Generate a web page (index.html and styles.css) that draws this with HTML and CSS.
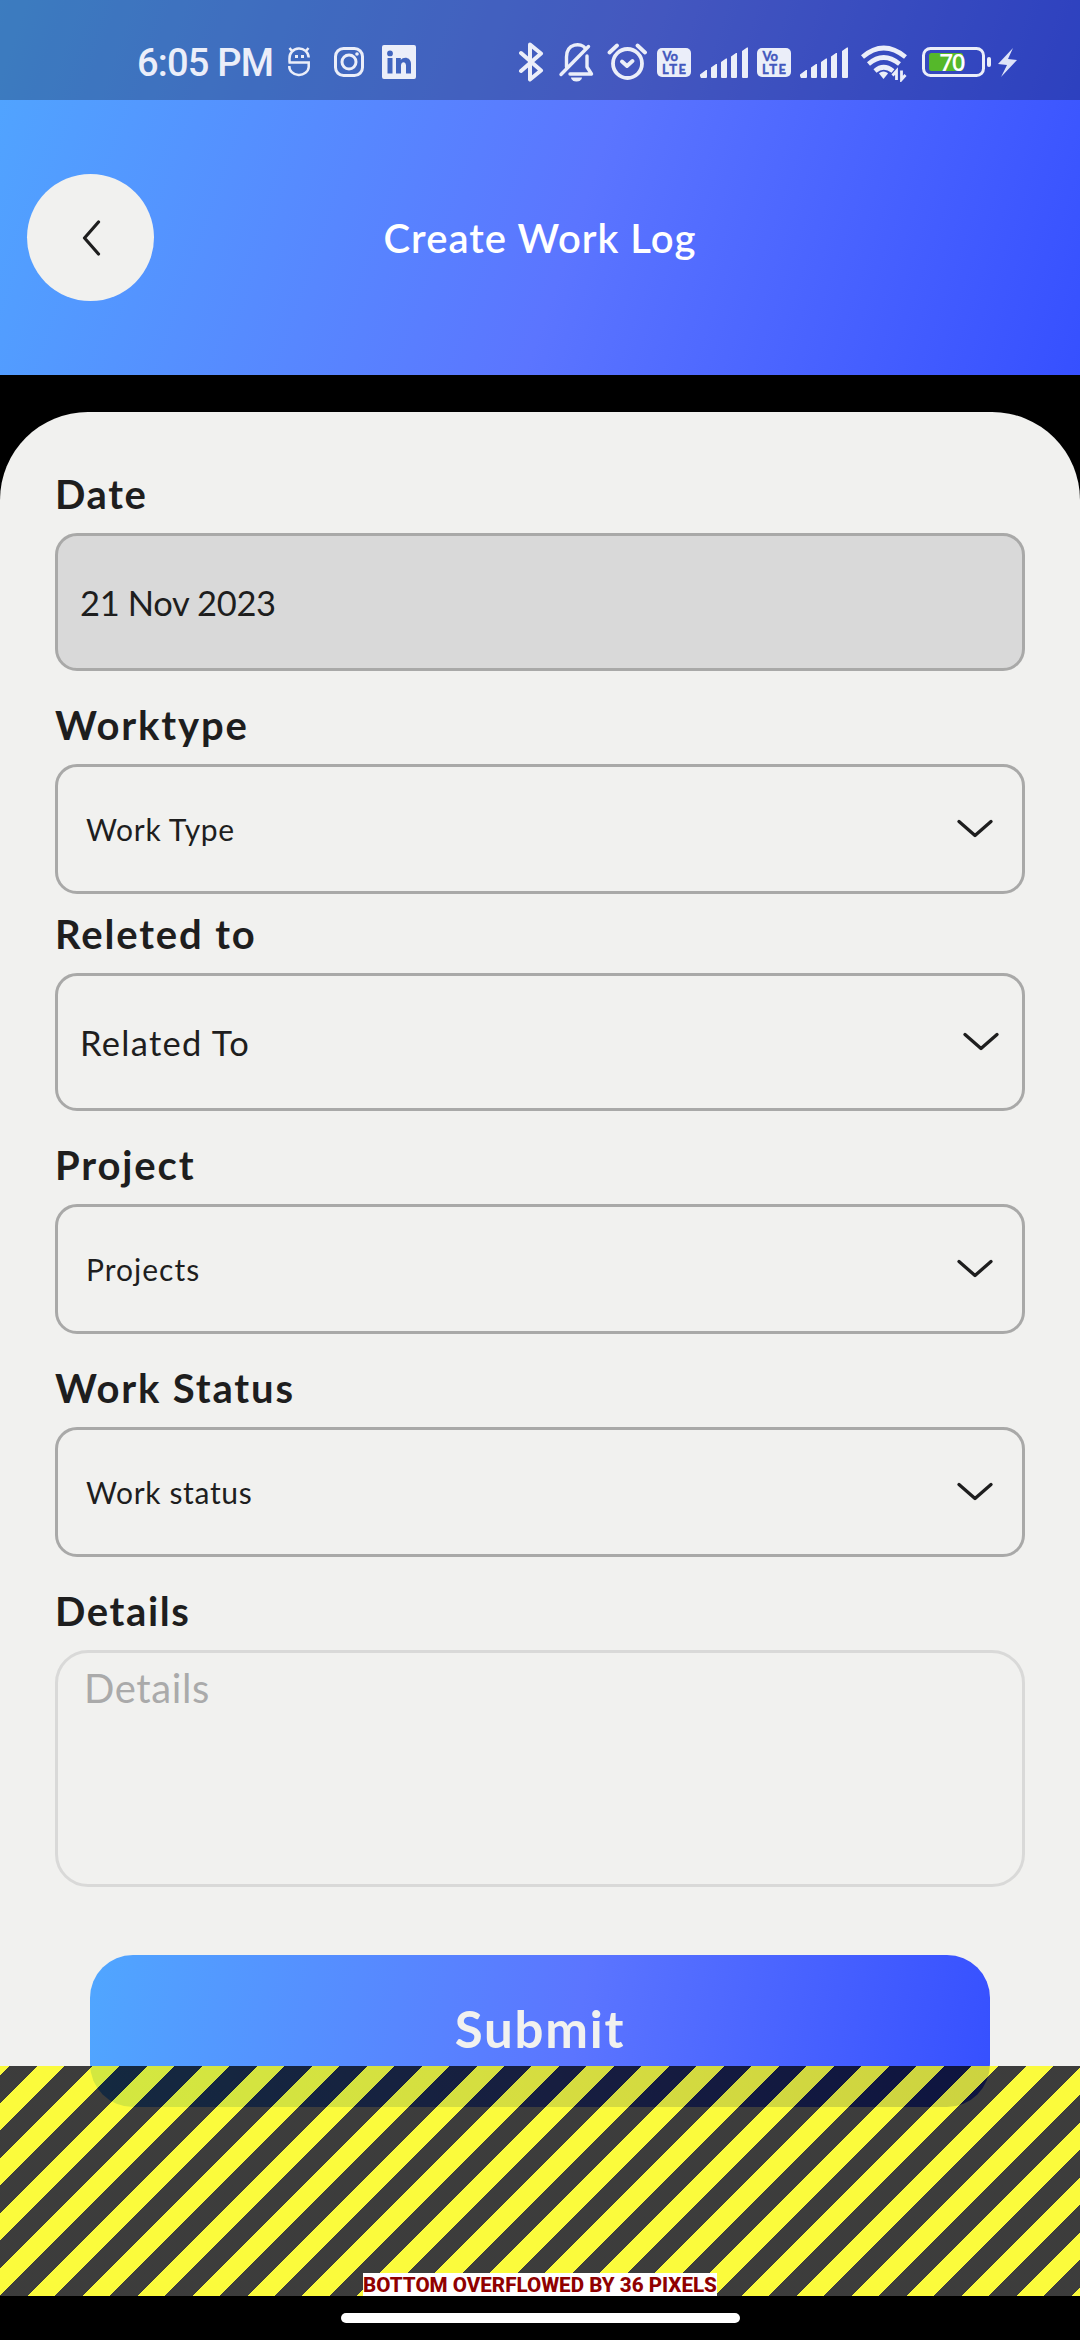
FILE: index.html
```html
<!DOCTYPE html>
<html lang="en">
<head>
<meta charset="utf-8">
<title>Create Work Log</title>
<link rel="stylesheet" href="styles.css">
</head>
<body>
<div class="screen">
  <header class="header">
    <div class="status">
      <span class="time">6:05 PM</span>
      <svg class="ic s-app" width="24" height="40" viewBox="287 42 24 40" fill="none" stroke="#ebeef9" stroke-width="2.500"><path d="M289.500 62.500V58.500a9.600 9.500 0 0 1 19.200-1M288.500 62.500H308.700V67a9.700 8.500 0 0 1-19.400-1M292 51l-2.500-3M306 51l2.500-3"/><path d="M295 56.500h3M301 56.500h3" stroke-width="3"/></svg>
      <svg class="ic insta" width="32" height="40" viewBox="333 42 32 40" fill="none" stroke="#ebeef9" stroke-width="3"><rect x="335.500" y="48.500" width="27" height="27" rx="8"/><circle cx="349" cy="62" r="7"/><circle cx="357" cy="54" r="1.800" fill="#ebeef9" stroke="none"/></svg>
      <svg class="ic linked" width="34" height="40" viewBox="382 42 34 40" fill="#ebeef9"><path fill-rule="evenodd" d="M384 45h30a2 2 0 0 1 2 2v30a2 2 0 0 1-2 2h-30a2 2 0 0 1-2-2V47a2 2 0 0 1 2-2zM387.500 58v15.500h5V58zM390 50.500a2.900 2.900 0 1 0 .01 5.800a2.900 2.900 0 0 0-.01-5.800zM396 58v15.500h5v-8c0-4.500 5-4.500 5 0v8h5v-9.500c0-7-7.500-8-10.200-4V58z"/></svg>
      <svg class="ic bt" width="26" height="40" viewBox="518 42 26 40" fill="none" stroke="#ebeef9" stroke-width="4" stroke-linejoin="round" stroke-linecap="round"><path d="M521 53l20 17.500-11 9V44.500l11 9L521 71"/></svg>
      <svg class="ic bell" width="36" height="40" viewBox="558 42 36 40" fill="none" stroke="#ebeef9" stroke-width="3.400" stroke-linecap="round" stroke-linejoin="round"><path d="M561 74.500L588.500 46.500M566.500 67V57c0-14 15-14.500 18.500-9M587 56v11l4.500 7H570"/><path d="M571 77.500h11a5.500 4 0 0 1-11 0z" fill="#ebeef9" stroke="none"/></svg>
      <svg class="ic alarm" width="40" height="40" viewBox="607 42 40 40" fill="none" stroke="#ebeef9" stroke-width="3.800" stroke-linecap="round" stroke-linejoin="round"><circle cx="627.500" cy="63.500" r="14.500"/><path d="M609.500 52.500l7.500-7M645 52.500l-7.500-7M622 61.500l5 4.500 5.500-5"/></svg>
      <svg class="ic volte" width="34" height="40" viewBox="657 42 34 40"><rect x="657" y="48" width="34" height="29" rx="5" fill="#ebeef9"/><text x="662.500" y="61" class="vt">Vo</text><text x="662" y="73.500" class="vt" textLength="24">LTE</text></svg>
      <svg class="ic sig" width="48" height="40" viewBox="700 42 48 40" fill="#ebeef9"><path d="M700 76v-1.500l6-4.500h1v7a1 1 0 0 1-1 1h-5zM711 67.500l5-3.500h1v13a1 1 0 0 1-1 1h-4a1 1 0 0 1-1-1zM721 62l5-3.500h1V77a1 1 0 0 1-1 1h-4a1 1 0 0 1-1-1zM731 56.500l5-3.500h1v24a1 1 0 0 1-1 1h-4a1 1 0 0 1-1-1zM742 51l5-3.500h1V77a1 1 0 0 1-1 1h-4a1 1 0 0 1-1-1z"/></svg>
      <svg class="ic volte2" width="34" height="40" viewBox="657 42 34 40"><rect x="657" y="48" width="34" height="29" rx="5" fill="#ebeef9"/><text x="662.500" y="61" class="vt">Vo</text><text x="662" y="73.500" class="vt" textLength="24">LTE</text></svg>
      <svg class="ic sig" width="48" height="40" viewBox="700 42 48 40" fill="#ebeef9"><path d="M700 76v-1.500l6-4.500h1v7a1 1 0 0 1-1 1h-5zM711 67.500l5-3.500h1v13a1 1 0 0 1-1 1h-4a1 1 0 0 1-1-1zM721 62l5-3.500h1V77a1 1 0 0 1-1 1h-4a1 1 0 0 1-1-1zM731 56.500l5-3.500h1v24a1 1 0 0 1-1 1h-4a1 1 0 0 1-1-1zM742 51l5-3.500h1V77a1 1 0 0 1-1 1h-4a1 1 0 0 1-1-1z"/></svg>
      <svg class="ic wifi" width="48" height="40" viewBox="860 42 48 40" fill="none" stroke="#ebeef9" stroke-width="4.600"><path d="M862.500 57q21-18 43 0M868.500 64q15-13 31 0M875 71q8.500-7.500 18 0"/><path d="M883.500 71.500c2 0 4 1 4.500 2l-4.500 5.500-4.500-5.500c.5-1 2.500-2 4.500-2z" fill="#ebeef9" stroke="none"/><path d="M896.500 80v-9l-4 4.500M901.500 70.500v9l4-4.500" stroke-width="2.800"/></svg>
      <svg class="ic batt" width="70" height="40" viewBox="922 42 70 40"><rect x="923.500" y="48.500" width="60" height="27" rx="7" fill="none" stroke="#ebeef9" stroke-width="3"/><rect x="929" y="53" width="34" height="18" rx="2.500" fill="#55b82a"/><rect x="987" y="57" width="4" height="10" rx="2" fill="#ebeef9"/><text x="939.500" y="71" class="pct" textLength="26">70</text></svg>
      <svg class="ic bolt" width="20" height="40" viewBox="998 42 20 40" fill="#dfe4f8"><path d="M1013 48l-15 16 9 1-6 12 16-17-9-1z"/></svg>
    </div>
    <div class="bar">
      <button class="back" aria-label="Back"><svg width="22" height="40" viewBox="0 0 22 40" fill="none" stroke="#1e1e1e" stroke-width="3.200" stroke-linecap="round" stroke-linejoin="round"><path d="M18.500 4L4.500 20l14 16"/></svg></button>
      <h1 class="title">Create Work Log</h1>
    </div>
  </header>
  <main class="panel">
    <section class="field">
      <h2 class="label l-date">Date</h2>
      <div class="box tall filled"><span class="v-date">21 Nov 2023</span></div>
    </section>
    <section class="field near">
      <h2 class="label">Worktype</h2>
      <div class="box"><span class="v-type">Work Type</span><svg class="chev" viewBox="0 0 36 20"><path d="M2 2.500L18 16.500 34 2.500"/></svg></div>
    </section>
    <section class="field">
      <h2 class="label">Releted to</h2>
      <div class="box tall"><span class="v-rel">Related To</span><svg class="chev" viewBox="0 0 36 20"><path d="M2 2.500L18 16.500 34 2.500"/></svg></div>
    </section>
    <section class="field">
      <h2 class="label">Project</h2>
      <div class="box"><span class="v-proj">Projects</span><svg class="chev" viewBox="0 0 36 20"><path d="M2 2.500L18 16.500 34 2.500"/></svg></div>
    </section>
    <section class="field">
      <h2 class="label">Work Status</h2>
      <div class="box"><span class="v-stat">Work status</span><svg class="chev" viewBox="0 0 36 20"><path d="M2 2.500L18 16.500 34 2.500"/></svg></div>
    </section>
    <section class="field last">
      <h2 class="label l-det">Details</h2>
      <div class="area"><span class="v-det">Details</span></div>
    </section>
    <button class="submit"><span>Submit</span></button>
    <div class="overflow"><span class="warn">BOTTOM OVERFLOWED BY 36 PIXELS</span></div>
  </main>
  <footer class="nav"><span class="pill"></span></footer>
</div>
</body>
</html>
```
FILE: styles.css
```css
* { box-sizing: border-box; }
body { margin: 0; background: #000; font-family: Lato, "Liberation Sans", sans-serif; color: #1e1e1e; }
h1, h2 { margin: 0; }
button { border: 0; padding: 0; font-family: inherit; }
.screen { width: 1080px; height: 2340px; display: flex; flex-direction: column; overflow: hidden; background: #000; }
.header { height: 375px; margin-bottom: 37px; flex: none; background: linear-gradient(109.150deg, #50a6ff 0%, #5b75ff 54%, #3650ff 100%); }

.status { height: 100px; padding-top: 42px; padding-left: 137px; background: rgba(0, 0, 0, .25); display: flex; align-items: flex-start; }
.time { width: 150px; font: 500 38px/42px Roboto, sans-serif; letter-spacing: -.8px; color: #ebeef9; white-space: nowrap; }
.ic { display: block; flex: none; }
.insta { margin-left: 22px; }
.linked { margin-left: 17px; }
.bt { margin-left: 102px; }
.bell { margin-left: 14px; }
.alarm { margin-left: 13px; }
.volte { margin-left: 10px; }
.sig { margin-left: 9px; }
.volte2 { margin-left: 9px; }
.wifi { margin-left: 12px; }
.batt { margin-left: 14px; }
.bolt { margin-left: 6px; }
.vt { font: 700 13px Lato, sans-serif; fill: #4257bd; stroke: #4257bd; stroke-width: .4px; }
.pct { font: 600 24px "Open Sans", sans-serif; fill: #fff; }

.bar { height: 275px; display: grid; grid-template-columns: 154px 1fr 154px; align-items: start; padding-top: 74px; }
.back { width: 127px; height: 127px; margin-left: 27px; border-radius: 50%; background: #f1f1ef; display: flex; align-items: center; justify-content: center; }
.title { font-size: 40px; line-height: 129px; font-weight: 600; color: #fff; text-align: center; letter-spacing: 1px; }

.panel { position: relative; height: 1884px; flex: none; padding: 61px 55px 0; background: #f1f1ef; border-radius: 88px 88px 0 0; overflow: hidden; }
.field { margin-bottom: 33px; }
.near { margin-bottom: 19px; }
.last { margin-bottom: 68px; }
.label { height: 60px; font-size: 40px; line-height: 43px; font-weight: 700; letter-spacing: 1.850px; white-space: nowrap; }
.l-date { letter-spacing: 1.600px; }
.l-det { letter-spacing: 1.600px; }
.box { height: 130px; border: 3px solid #a9a9a8; border-radius: 22px; display: flex; align-items: center; justify-content: space-between; padding: 0 29px 0 28px; font-size: 30px; }
.tall { height: 138px; font-size: 34.500px; padding: 0 23px 0 22px; }
.v-date { letter-spacing: -.350px; }
.v-type { letter-spacing: .700px; }
.v-rel { letter-spacing: 1.300px; }
.v-proj { letter-spacing: 1px; }
.v-stat { letter-spacing: .650px; }
.v-det { letter-spacing: .600px; }
.filled { background: #d9d9d9; }
.chev { width: 36px; height: 20px; fill: none; stroke: #1e1e1e; stroke-width: 3.300px; stroke-linecap: round; stroke-linejoin: round; }
.area { height: 237px; border: 3px solid #d9d9d8; border-radius: 33px; padding: 9px 26px; font-size: 40px; line-height: 52px; color: #aaa; }
.submit { display: block; width: 900px; height: 152px; margin: 0 35px; padding-bottom: 5px; border-radius: 43px; background: linear-gradient(99.570deg, #50a6ff 0%, #5b75ff 54%, #3650ff 100%); color: #f1f1ef; font-size: 51px; font-weight: 700; letter-spacing: 1.800px; }

.overflow { position: absolute; left: 0; right: 0; bottom: 0; height: 230px; display: flex; justify-content: center; align-items: flex-end; background: repeating-linear-gradient(135deg, rgba(255, 255, 0, .75) 0 7.070px, rgba(0, 0, 0, .75) 7.070px 26.490px, rgba(255, 255, 0, .75) 26.490px 38.850px); }
.warn { height: 23px; background: #fff; color: #900000; font: 800 20.600px/25px Roboto, sans-serif; white-space: nowrap; }
.nav { height: 44px; padding-top: 17px; display: flex; justify-content: center; }
.pill { width: 399px; height: 10px; border-radius: 5px; background: #fff; }
```
